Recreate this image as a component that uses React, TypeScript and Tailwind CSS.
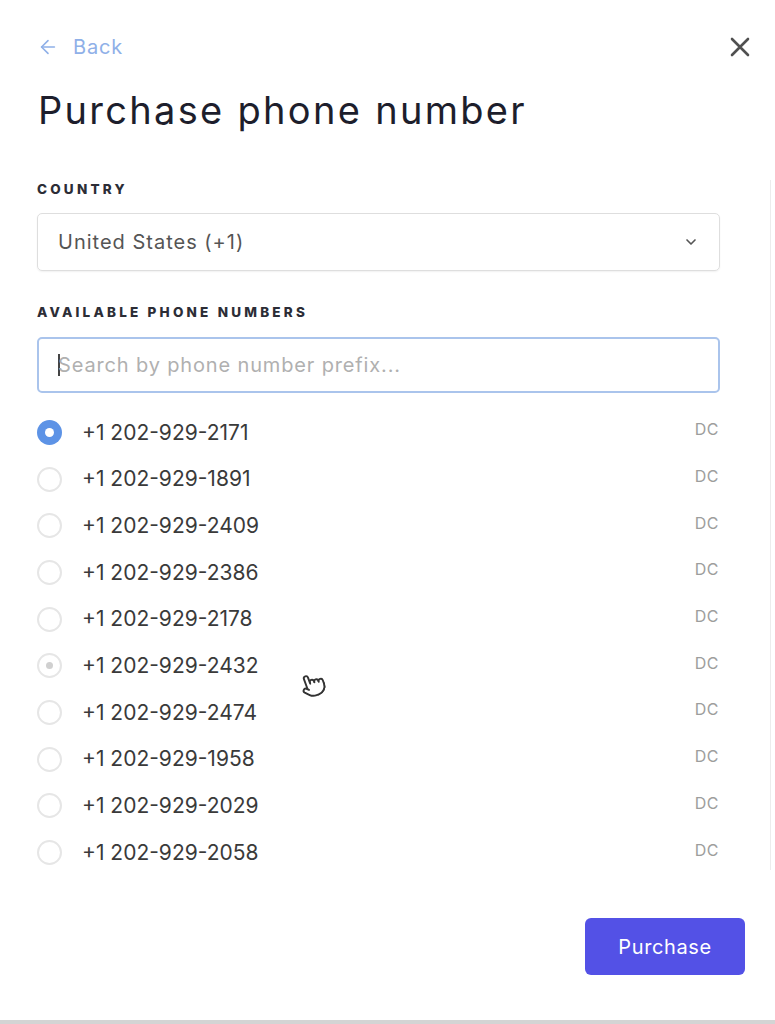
import { useState } from "react";
import { ArrowLeft, ChevronDown, Pointer } from "lucide-react";

const NUMBERS = [
  "+1 202-929-2171",
  "+1 202-929-1891",
  "+1 202-929-2409",
  "+1 202-929-2386",
  "+1 202-929-2178",
  "+1 202-929-2432",
  "+1 202-929-2474",
  "+1 202-929-1958",
  "+1 202-929-2029",
  "+1 202-929-2058",
];

export default function App() {
  const [selected, setSelected] = useState(0);

  return (
    <div
      className="relative w-[775px] h-[1024px] bg-white overflow-hidden"
      style={{ fontFamily: "Inter, 'Noto Sans', sans-serif" }}
    >
      {/* Header */}
      <div className="px-[38px] pt-[35px]">
        <div className="flex items-center justify-between h-6">
          <button className="flex items-center gap-[14px] text-[20px] leading-6 tracking-[0.8px] text-[#8fb0e8]">
            <ArrowLeft size={22} strokeWidth={1.75} className="-ml-[1px]" />
            Back
          </button>
          <button className="-mr-[13px] text-[#505050]">
            <svg width="20" height="20" viewBox="0 0 20 20" fill="none" stroke="currentColor" strokeWidth="2.6" strokeLinecap="round">
              <path d="M2 2L18 18M18 2L2 18" />
            </svg>
          </button>
        </div>
        <h1 className="mt-[29px] text-[38px] leading-[44px] text-[#1d1e2c] tracking-[2.3px]">
          Purchase phone number
        </h1>
      </div>

      {/* Scroll area */}
      <div className="mt-[48px] mr-[4px] h-[690px] border-r border-[#ececec] pl-[37px] pr-[50px] pt-px">
        <div className="text-[13.5px] leading-4 font-extrabold tracking-[3.2px] text-[#2c2d36]">
          COUNTRY
        </div>
        <div className="mt-[16px] h-[58px] flex items-center justify-between rounded-[5px] border border-[#dedede] shadow-[0_1px_2px_rgba(0,0,0,0.06)] pl-[20px] pr-[20px]">
          <span className="text-[20px] tracking-[1px] text-[#555]">United States (+1)</span>
          <ChevronDown size={16} strokeWidth={2.5} className="text-[#555]" />
        </div>

        <div className="mt-[33px] text-[13.5px] leading-4 font-extrabold tracking-[3.2px] text-[#2c2d36]">
          AVAILABLE PHONE NUMBERS
        </div>
        <div className="mt-[17px] h-[56px] flex items-center rounded-[5px] border-2 border-[#aac4ec] pl-[19px]">
          <span className="w-[2px] h-[22px] bg-[#444] mr-[-2px]" />
          <span className="text-[20px] tracking-[0.85px] text-[#b0b0b0]">Search by phone number prefix...</span>
        </div>

        <div className="mt-[16px]">
          {NUMBERS.map((n, i) => (
            <div
              key={n}
              onClick={() => setSelected(i)}
              className="h-[46.7px] flex items-center justify-between cursor-pointer"
            >
              <div className="flex items-center">
                {i === selected ? (
                  <span className="w-[25px] h-[25px] rounded-full bg-[#5d93e6] flex items-center justify-center">
                    <span className="w-[9px] h-[9px] rounded-full bg-white" />
                  </span>
                ) : i === 5 ? (
                  <span className="w-[25px] h-[25px] rounded-full border-2 border-[#e6e6e6] flex items-center justify-center">
                    <span className="w-[7px] h-[7px] rounded-full bg-[#d0d0d0]" />
                  </span>
                ) : (
                  <span className="w-[25px] h-[25px] rounded-full border-2 border-[#e6e6e6]" />
                )}
                <span className="ml-[20px] text-[21px] text-[#3a3a3a] tracking-[0px]">{n}</span>
              </div>
              <span className="-mt-[6px] mr-[1px] text-[16px] tracking-[0.5px] text-[#9d9d9d]">DC</span>
            </div>
          ))}
        </div>
      </div>

      {/* Footer */}
      <div className="flex justify-end pr-[30px] mt-[48px]">
        <button className="w-[160px] h-[57px] rounded-[6px] bg-[#5351e6] text-white text-[20px] tracking-[0.6px]">
          Purchase
        </button>
      </div>

      <div className="absolute left-0 right-0 bottom-0 h-[4px] bg-[#d4d4d4]" />

      {/* Mouse cursor */}
      <Pointer
        size={26}
        strokeWidth={1.75}
        className="absolute left-[300px] top-[672px] text-[#333] fill-white -rotate-[20deg]"
      />
    </div>
  );
}
